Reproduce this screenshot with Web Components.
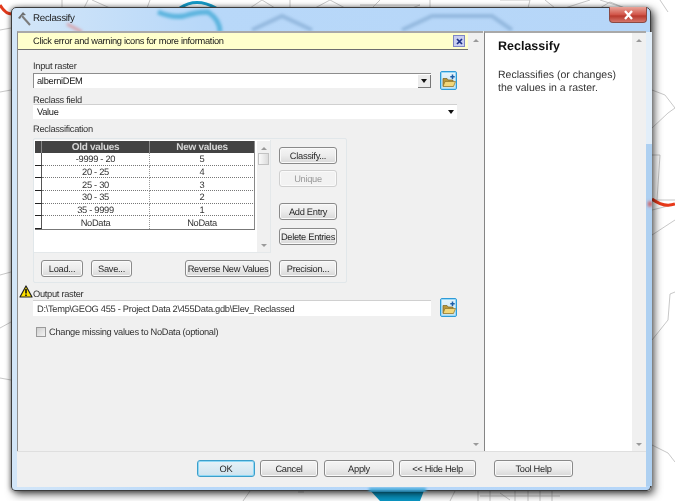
<!DOCTYPE html>
<html>
<head>
<meta charset="utf-8">
<style>
  html, body { margin: 0; padding: 0; background: #fff; }
</style>
</head>
<body>
<map-desktop>
  <tool-window heading="Reclassify">
    <form-panel slot="form">
      <message-bar>Click error and warning icons for more information</message-bar>
      <field-label style="margin-top:9px">Input raster</field-label>
      <field-row style="margin-top:1px">
        <combo-box boxed>alberniDEM</combo-box>
        <folder-button></folder-button>
      </field-row>
      <field-label style="margin-top:4px">Reclass field</field-label>
      <combo-box style="margin:-2px 11px 0 15px">Value</combo-box>
      <field-label style="margin-top:3px">Reclassification</field-label>
      <reclass-group style="margin-top:3px"></reclass-group>
      <field-label warn style="margin-top:4px">Output raster</field-label>
      <field-row style="margin-top:0">
        <text-box>D:\Temp\GEOG 455 - Project Data 2\455Data.gdb\Elev_Reclassed</text-box>
        <folder-button></folder-button>
      </field-row>
      <check-row style="margin-top:11px">Change missing values to NoData (optional)</check-row>
    </form-panel>
    <help-pane slot="help" heading="Reclassify">Reclassifies (or changes) the values in a raster.</help-pane>
    <push-button slot="buttons" kind="default" style="width:58px;margin-left:180px">OK</push-button>
    <push-button slot="buttons" style="width:58px;margin-left:5px">Cancel</push-button>
    <push-button slot="buttons" style="width:70px;margin-left:6px">Apply</push-button>
    <push-button slot="buttons" style="width:77px;margin-left:5px">&lt;&lt; Hide Help</push-button>
    <push-button slot="buttons" style="width:79px;margin-left:18px">Tool Help</push-button>
  </tool-window>
</map-desktop>

<script>
const UI_FONT = '"Liberation Sans", Arial, sans-serif';
const SMALL = '9.3px';

// Background map that shows around the dialog
class MapDesktop extends HTMLElement {
  constructor() {
    super();
    this.attachShadow({ mode: 'open' });
    this.shadowRoot.innerHTML = `
      <style>
        :host { display: block; position: relative; width: 675px; height: 501px; overflow: hidden; background: #fff; font: 11px ${UI_FONT}; letter-spacing: -.3px; color: #1a1a1a; text-rendering: geometricPrecision; filter: blur(.35px); }
        svg { position: absolute; left: 0; top: 0; }
        .lines { fill: none; stroke: #b0b0b0; stroke-width: .7; }
      </style>
      <svg width="675" height="501">
        <g class="lines">
          <path d="M62 0V8M88 0L84 8M92 0L110 8M150 0L147 8M250 8L262 0M262 0L275 8M290 0V8M315 8L330 0L345 8M360 5H420L412 8M380 0L372 8M430 0V8M500 0H530L528 8M545 0L555 8M565 8L590 0M600 8L610 2L625 8"/>
          <path d="M0 30L11 28M0 92L11 90M0 275L11 272M0 328L11 322M0 378L11 380"/>
          <path d="M652 90L665 95L675 108L668 113L652 128M652 155H660L657 200L652 202M652 200H675M652 210L672 205M652 235L675 220M652 340L668 320L670 294L675 292M652 445L668 453L675 462"/>
          <path d="M250 491L243 501M298 492H304M478 491V501M490 491V501M500 493L510 500M515 491V501M528 491V501M540 491V501M552 491V501M480 496H560M455 491L450 501M640 8L650 14M660 0L668 12M600 0L625 8"/>
        </g>
        <path d="M0 5Q6 15 13 14" fill="none" stroke="#e23a1c" stroke-width="3"/>
        <path d="M180 8Q196 -3 216 8" fill="none" stroke="#159bc8" stroke-width="3"/>
        <path d="M652 199Q664 208 675 204" fill="none" stroke="#e8391a" stroke-width="3"/>
        <path d="M368 488L425 488L420 501H380Z" fill="#0a98c6"/>
      </svg>
      <slot></slot>`;
  }
}

// Aero style window frame, the client area has a form, a help pane and a button bar
class ToolWindow extends HTMLElement {
  constructor() {
    super();
    this.attachShadow({ mode: 'open' });
    this.shadowRoot.innerHTML = `
      <style>
        :host { display: flex; flex-direction: column; position: absolute; left: 11px; top: 7px; width: 640px; height: 484px; box-sizing: border-box; border: 1px solid #3c3c3c; border-radius: 5px 5px 4px 4px; box-shadow: 3px 3px 9px rgba(0,0,0,.72), -1px 0 4px rgba(0,0,0,.35); background: linear-gradient(90deg, #d3e6f8, #b8d8f9 30%, #b6d6f8); padding: 0 4px 3px 5px; }
        .glass { position: absolute; left: 0; top: 0; pointer-events: none; }
        .title { display: flex; align-items: center; position: relative; height: 23px; box-sizing: border-box; padding-bottom: 2px; flex: none; gap: 1px; font-size: 9.8px; }
        .close { position: absolute; top: -1px; right: -1px; width: 38px; height: 16px; box-sizing: border-box; border: 1px solid #8a4a44; border-top: 0; border-radius: 0 0 4px 4px; background: linear-gradient(#e9a59a, #d2574b 50%, #b93a2e 60%, #d5756a); display: flex; align-items: center; justify-content: center; }
        .client { position: relative; flex: 1; display: flex; flex-direction: column; background: #f0f0f0; }
        .panes { display: flex; height: 421px; border-bottom: 1px solid #dfdfdf; box-sizing: border-box; }
        .panes ::slotted([slot=form]) { width: 466px; }
        .panes ::slotted([slot=help]) { margin-left: 1px; flex: 1; }
        .buttons { display: flex; padding-top: 8px; }
      </style>
      <svg class="glass" width="640" height="484">
        <defs><filter id="soft" x="-10%" y="-30%" width="120%" height="160%"><feGaussianBlur stdDeviation="1.5"/></filter></defs>
        <path d="M634 24H640V136H634Z" fill="#e2eef9"/>
        <path d="M634 136H640V478H634Z" fill="#aed0f1"/>
        <g filter="url(#soft)" fill="none">
          <path d="M146 4Q160 10 172 8Q184 4 196 4Q208 12 208 24" stroke="#5cb4de" stroke-width="5"/>
          <path d="M55 16L70 24" stroke="#d8a0a8" stroke-width="3"/>
          <path d="M240 22L270 8L300 22M390 22L420 8H480L500 22" stroke="#93b8de" stroke-width="4"/>
          <path d="M636 196H640" stroke="#d25a5a" stroke-width="5"/>
          <path d="M357 482H414" stroke="#3ba6d8" stroke-width="4"/>
        </g>
      </svg>
      <div class="title">
        <svg width="15" height="15" viewBox="0 0 15 15" aria-hidden="true">
          <path d="M5 5L13 14" stroke="#7b7b7b" stroke-width="2"/>
          <path d="M1 7L6 1L9 4L5 4.500L3 8Z" fill="#6d6f70"/>
        </svg>
        <span id="heading"></span>
        <div class="close">
          <svg width="11" height="10" viewBox="0 0 11 10" aria-hidden="true"><path d="M2 1L9 9M9 1L2 9" stroke="#fff" stroke-width="2.300"/></svg>
        </div>
      </div>
      <div class="client">
        <div class="panes">
          <slot name="form"></slot>
          <slot name="help"></slot>
        </div>
        <div class="buttons"><slot name="buttons"></slot></div>
      </div>`;
    this.shadowRoot.getElementById('heading').textContent = this.getAttribute('heading');
  }
}

// Scrollable left side of the dialog
class FormPanel extends HTMLElement {
  constructor() {
    super();
    this.attachShadow({ mode: 'open' });
    this.shadowRoot.innerHTML = `
      <style>
        :host { display: flex; box-sizing: border-box; height: 420px; border-top: 2px solid #a9a9a9; border-left: 1px solid #8f8f8f; }
        .body { width: 450px; display: flex; flex-direction: column; }
      </style>
      <div class="body"><slot></slot></div>
      <scroll-bar style="width:15px"></scroll-bar>`;
  }
}

class MessageBar extends HTMLElement {
  constructor() {
    super();
    this.attachShadow({ mode: 'open' });
    this.shadowRoot.innerHTML = `
      <style>
        :host { display: flex; align-items: center; flex: none; height: 17px; box-sizing: border-box; background: #ffffcc; border-bottom: 1px solid #6e6e6e; padding: 0 3px 0 15px; font-size: ${SMALL}; }
        .text { flex: 1; }
        .x { width: 12px; height: 12px; box-sizing: border-box; border: 1px solid #7e86c6; background: #c7cdf0; display: flex; align-items: center; justify-content: center; }
      </style>
      <span class="text"><slot></slot></span>
      <span class="x"><svg width="7" height="7" viewBox="0 0 7 7" aria-hidden="true"><path d="M1 1L6 6M6 1L1 6" stroke="#1b2f86" stroke-width="1.700"/></svg></span>`;
  }
}

class FieldLabel extends HTMLElement {
  constructor() {
    super();
    this.attachShadow({ mode: 'open' });
    this.shadowRoot.innerHTML = `
      <style>
        :host { display: block; position: relative; margin-left: 15px; height: 13px; line-height: 14px; font-size: ${SMALL}; color: #333; }
        svg { position: absolute; left: -14px; top: -2px; }
      </style>
      ${this.hasAttribute('warn') ? `<svg width="14" height="13" viewBox="0 0 14 13" aria-hidden="true">
        <path d="M7 1L13 12H1Z" fill="#ffe100" stroke="#222" stroke-width="1.200" stroke-linejoin="round"/>
        <path d="M7 4V8.500M7 9.500V11" stroke="#111" stroke-width="1.600"/>
      </svg>` : ''}
      <slot></slot>`;
  }
}

class FieldRow extends HTMLElement {
  constructor() {
    super();
    this.attachShadow({ mode: 'open' });
    this.shadowRoot.innerHTML = `
      <style>
        :host { display: flex; align-items: flex-start; gap: 9px; height: 16px; margin-left: 15px; margin-right: 11px; }
        ::slotted(:first-child) { flex: 1; }
      </style>
      <slot></slot>`;
  }
}

class ComboBox extends HTMLElement {
  constructor() {
    super();
    this.attachShadow({ mode: 'open' });
    const boxed = this.hasAttribute('boxed');
    this.shadowRoot.innerHTML = `
      <style>
        :host { display: flex; align-items: center; box-sizing: border-box; height: 15px; background: #fff; padding-left: 3px; font-size: ${SMALL}; border-top: 1px solid ${boxed ? '#8d8d8d' : '#d0d0d0'}; border-left: 1px solid ${boxed ? '#8d8d8d' : '#fff'}; }
        .text { flex: 1; }
        .drop { box-sizing: border-box; width: 13px; height: 13px; display: flex; align-items: center; justify-content: center; ${boxed ? 'background:#ececec;border-right:1px solid #777;border-bottom:1px solid #777;' : ''} }
        .arrow { width: 0; height: 0; border: 3px solid transparent; border-top: 4px solid #111; border-bottom: 0; }
      </style>
      <span class="text"><slot></slot></span>
      <span class="drop"><span class="arrow"></span></span>`;
  }
}

class TextBox extends HTMLElement {
  constructor() {
    super();
    this.attachShadow({ mode: 'open' });
    this.shadowRoot.innerHTML = `
      <style>
        :host { display: flex; align-items: center; box-sizing: border-box; height: 16px; background: #fff; padding-left: 4px; font-size: ${SMALL}; border-top: 1px solid #d0d0d0; color: #333; }
      </style>
      <slot></slot>`;
  }
}

class FolderButton extends HTMLElement {
  constructor() {
    super();
    this.attachShadow({ mode: 'open' });
    this.shadowRoot.innerHTML = `
      <style>
        :host { display: flex; align-items: center; justify-content: center; flex: none; width: 17px; height: 19px; box-sizing: border-box; margin: -2px 0; border: 1px solid #2e9bd8; border-radius: 2px; box-shadow: inset 0 0 0 1px #9bd9f6; background: linear-gradient(#e6f4fb, #c3e2f2); }
      </style>
      <svg width="14" height="14" viewBox="0 0 14 14" aria-hidden="true">
        <path d="M1 4.500H5L6 6H11V12H1Z" fill="#b8963c" stroke="#7a6420" stroke-width=".7"/>
        <path d="M3 7.500H13.500L11.500 12.500H1Z" fill="#f1d77a" stroke="#8d7228" stroke-width=".7"/>
        <path d="M10.500 .5V5M8.300 2.700H12.700" stroke="#1c5ea8" stroke-width="1.500"/>
      </svg>`;
  }
}

class ScrollBar extends HTMLElement {
  constructor() {
    super();
    this.attachShadow({ mode: 'open' });
    this.shadowRoot.innerHTML = `
      <style>
        :host { display: flex; flex-direction: column; align-items: center; justify-content: space-between; box-sizing: border-box; flex: none; padding: 6px 0 5px; background: #f0f0f0; position: relative; }
        .up, .down { width: 0; height: 0; border: 3px solid transparent; }
        .up { border-bottom: 3px solid #9a9a9a; border-top: 0; }
        .down { border-top: 3px solid #9a9a9a; border-bottom: 0; }
        .thumb { position: absolute; left: 1px; right: 1px; top: 12px; height: 12px; border: 1px solid #c2c2c2; box-sizing: border-box; background: linear-gradient(90deg, #fafafa, #dcdcdc); }
      </style>
      <span class="up"></span>
      ${this.hasAttribute('thumb') ? '<span class="thumb"></span>' : ''}
      <span class="down"></span>`;
  }
}

// Old value / new value grid
class ReclassTable extends HTMLElement {
  constructor() {
    super();
    this.attachShadow({ mode: 'open' });
    this.shadowRoot.innerHTML = `
      <style>
        :host { display: block; width: 220px; font-size: ${SMALL}; color: #333; }
        .grid { display: grid; grid-template-columns: 7px 108px 105px; grid-template-rows: 12px; grid-auto-rows: 12.700px; border-bottom: 1px solid #777; box-sizing: border-box; }
        .grid > div { display: flex; align-items: center; justify-content: center; box-sizing: border-box; padding-top: 1px; border-bottom: 1px dotted #777; border-right: 1px dotted #999; }
        .grid > .head { background: #434343; color: #d6d6d6; font-weight: bold; border: 0; border-right: 1px solid #888; font-size: 10px; padding-top: 0; }
        .grid > .stub { background: #fff; border-bottom: 1px solid #222; border-right: 1px solid #555; }
        .grid > .last { border-right: 1px solid #888; }
        .grid > .end { border-bottom: 0; }
      </style>
      <div class="grid"></div>`;
  }

  set data(rows) {
    if (!rows) return;
    const cells = ['<div class="head"></div><div class="head">Old values</div><div class="head">New values</div>'];
    rows.forEach((row, i) => {
      const end = i === rows.length - 1 ? ' end' : '';
      cells.push(`<div class="stub"></div><div class="${end}">${row[0]}</div><div class="last${end}">${row[1]}</div>`);
    });
    this.shadowRoot.querySelector('.grid').innerHTML = cells.join('');
  }
}

class ReclassGroup extends HTMLElement {
  constructor() {
    super();
    this.attachShadow({ mode: 'open' });
    this.shadowRoot.innerHTML = `
      <style>
        :host { display: grid; grid-template-columns: 237px 66px; grid-template-rows: 113px 1fr; width: 314px; height: 145px; box-sizing: border-box; margin-left: 15px; border: 1px solid #e1e7ea; border-radius: 2px; padding: 1px 0 0 0; background: #f1f1f1; }
        .list { display: flex; background: #fff; padding: 1px 0 0 1px; border-right: 1px solid #e4e8ea; border-bottom: 1px solid #e4e8ea; box-sizing: border-box; justify-content: space-between; }
        .side { display: flex; flex-direction: column; padding: 7px 0 0 8px; gap: 6px; }
        .foot { display: flex; padding: 7px 0 0 7px; gap: 8px; grid-column: 1; }
        .right { padding: 7px 0 0 8px; }
      </style>
      <div class="list">
        <reclass-table></reclass-table>
        <scroll-bar thumb style="width:13px;height:111px"></scroll-bar>
      </div>
      <div class="side">
        <push-button style="width:58px">Classify...</push-button>
        <push-button kind="disabled" style="width:58px">Unique</push-button>
        <push-button style="width:58px;margin-top:10px">Add Entry</push-button>
        <push-button style="width:58px;margin-top:2px">Delete Entries</push-button>
      </div>
      <div class="foot">
        <push-button style="width:42px">Load...</push-button>
        <push-button style="width:41px">Save...</push-button>
        <push-button style="width:86px;margin-left:45px">Reverse New Values</push-button>
      </div>
      <div class="right"><push-button style="width:58px">Precision...</push-button></div>`;
    this.shadowRoot.querySelector('reclass-table').data = [
      ['-9999 - 20', '5'],
      ['20 - 25', '4'],
      ['25 - 30', '3'],
      ['30 - 35', '2'],
      ['35 - 9999', '1'],
      ['NoData', 'NoData']
    ];
  }
}

class PushButton extends HTMLElement {
  constructor() {
    super();
    this.attachShadow({ mode: 'open' });
    const kind = this.getAttribute('kind');
    this.shadowRoot.innerHTML = `
      <style>
        :host { display: flex; align-items: center; justify-content: center; flex: none; box-sizing: border-box; height: 17px; white-space: nowrap; font-size: ${SMALL}; color: ${kind === 'disabled' ? '#9a9a9a' : '#2a2a2a'}; border: 1px solid ${kind === 'default' ? '#3c9fcb' : kind === 'disabled' ? '#cfcfcf' : '#8a8a8a'}; border-radius: 3px; background: ${kind === 'default' ? 'linear-gradient(#e6f2f8, #cfe3ee)' : kind === 'disabled' ? '#f2f2f2' : 'linear-gradient(#f5f5f5, #ececec 50%, #d8d8d8)'}; box-shadow: ${kind === 'default' ? 'inset 0 0 0 1px #8fd8f5' : 'inset 0 0 0 1px #fafafa'}; }
      </style>
      <slot></slot>`;
  }
}

class CheckRow extends HTMLElement {
  constructor() {
    super();
    this.attachShadow({ mode: 'open' });
    this.shadowRoot.innerHTML = `
      <style>
        :host { display: flex; align-items: center; gap: 3px; height: 10px; margin-left: 18px; font-size: ${SMALL}; color: #333; }
        .box { width: 10px; height: 10px; box-sizing: border-box; border: 1px solid #9a9a9a; background: linear-gradient(135deg, #cfcfcf, #f3f3f3); }
      </style>
      <span class="box"></span>
      <slot></slot>`;
  }
}

class HelpPane extends HTMLElement {
  constructor() {
    super();
    this.attachShadow({ mode: 'open' });
    this.shadowRoot.innerHTML = `
      <style>
        :host { display: flex; box-sizing: border-box; height: 420px; border-left: 1px solid #858585; border-top: 2px solid #a9a9a9; letter-spacing: 0; }
        .page { flex: 1; background: #fff; padding: 6px 8px 0 13px; color: #333; }
        h1 { margin: 0 0 15px; font-size: 12.500px; line-height: 15px; font-weight: bold; color: #111; }
        p { margin: 0; font-size: 10.500px; line-height: 13px; width: 125px; }
      </style>
      <div class="page"><h1></h1><p><slot></slot></p></div>
      <scroll-bar style="width:14px"></scroll-bar>`;
    this.shadowRoot.querySelector('h1').textContent = this.getAttribute('heading');
  }
}

// children first so their constructors are ready when the parents build them
customElements.define('scroll-bar', ScrollBar);
customElements.define('push-button', PushButton);
customElements.define('reclass-table', ReclassTable);
customElements.define('reclass-group', ReclassGroup);
customElements.define('message-bar', MessageBar);
customElements.define('field-label', FieldLabel);
customElements.define('field-row', FieldRow);
customElements.define('combo-box', ComboBox);
customElements.define('text-box', TextBox);
customElements.define('folder-button', FolderButton);
customElements.define('check-row', CheckRow);
customElements.define('help-pane', HelpPane);
customElements.define('form-panel', FormPanel);
customElements.define('tool-window', ToolWindow);
customElements.define('map-desktop', MapDesktop);
</script>
</body>
</html>
